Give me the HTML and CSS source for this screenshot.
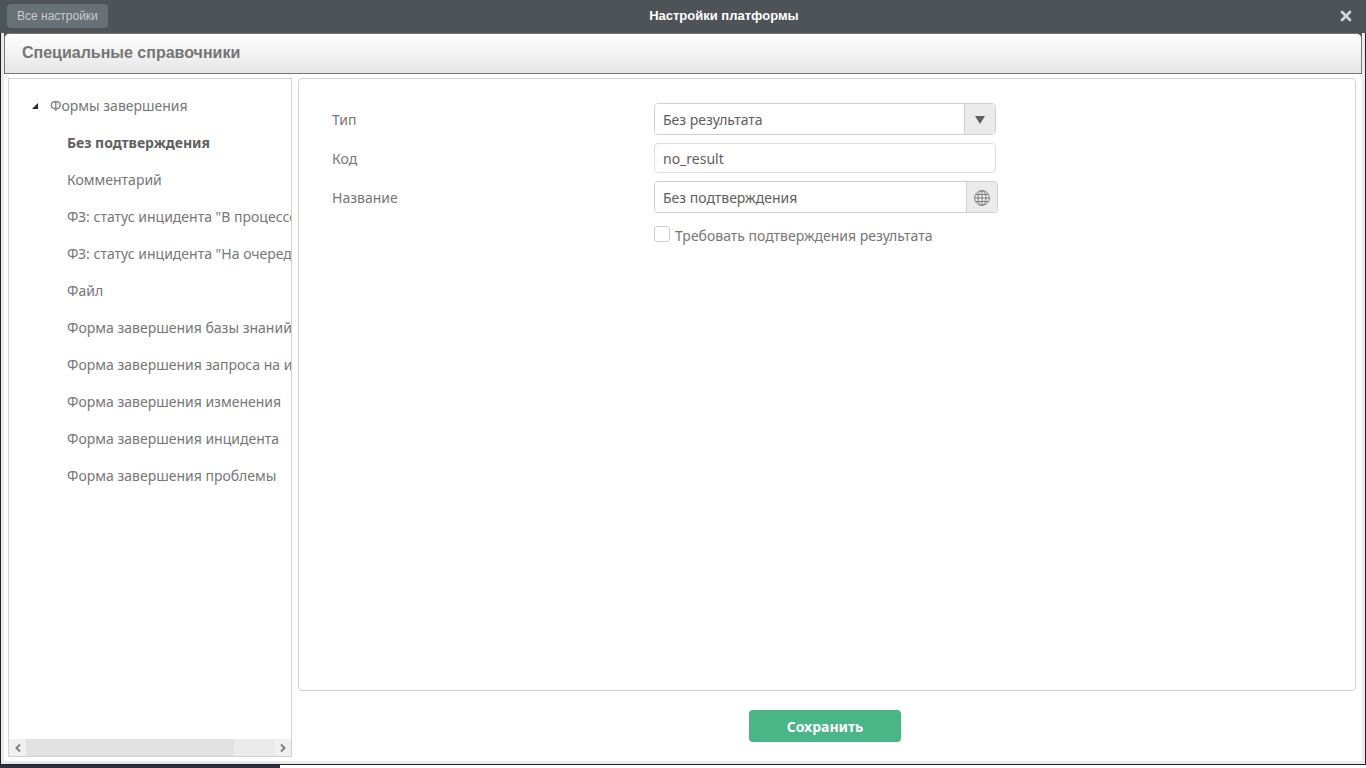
FILE: index.html
```html
<!DOCTYPE html>
<html lang="ru">
<head>
<meta charset="utf-8">
<title>Настройки платформы</title>
<link rel="stylesheet" href="styles.css">
</head>
<body>
<div class="dialog">
  <header class="titlebar">
    <button class="all-settings" type="button">Все настройки</button>
    <h1 class="title">Настройки платформы</h1>
    <button class="close" type="button" aria-label="Закрыть">
      <svg width="12" height="12" viewBox="0 0 12 12"><path d="M2 2L10 10M10 2L2 10" fill="none" stroke="currentColor" stroke-width="2.6" stroke-linecap="round"/></svg>
    </button>
  </header>
  <div class="frame">
    <div class="section-wrap"><h2 class="section">Специальные справочники</h2></div>
    <main class="content">
      <nav class="sidebar" aria-label="Справочники">
        <div class="tree">
          <div class="tree-root">
            <svg class="expander" width="6" height="6" viewBox="0 0 6 6"><path d="M6 0V6H0Z" fill="#222"/><path d="M4.5 3V4.5H3Z" fill="#666"/></svg>
            <span>Формы завершения</span>
          </div>
          <ul class="tree-list">
            <li class="tree-item selected">Без подтверждения</li>
            <li class="tree-item">Комментарий</li>
            <li class="tree-item">ФЗ: статус инцидента "В процессе"</li>
            <li class="tree-item">ФЗ: статус инцидента "На очереди"</li>
            <li class="tree-item">Файл</li>
            <li class="tree-item">Форма завершения базы знаний</li>
            <li class="tree-item">Форма завершения запроса на изменение</li>
            <li class="tree-item">Форма завершения изменения</li>
            <li class="tree-item">Форма завершения инцидента</li>
            <li class="tree-item">Форма завершения проблемы</li>
          </ul>
        </div>
        <div class="scrollbar">
          <button class="scroll-arrow" type="button" aria-label="Влево"><svg width="6" height="8" viewBox="0 0 6 8"><path d="M5 0.5L1.5 4L5 7.5" fill="none" stroke="currentColor" stroke-width="2"/></svg></button>
          <div class="scroll-track"><div class="scroll-thumb"></div></div>
          <button class="scroll-arrow" type="button" aria-label="Вправо"><svg width="6" height="8" viewBox="0 0 6 8"><path d="M1 0.5L4.5 4L1 7.5" fill="none" stroke="currentColor" stroke-width="2"/></svg></button>
        </div>
      </nav>
      <form class="editor">
        <div class="panel">
          <div class="row">
            <label class="label" for="type">Тип</label>
            <div class="field">
              <div class="select-box">
                <select class="select" id="type"><option>Без результата</option></select>
                <span class="addon arrow-addon"><svg width="10" height="8" viewBox="0 0 10 8"><path d="M0 0H10L5 8Z" fill="#606060"/></svg></span>
              </div>
            </div>
          </div>
          <div class="row">
            <label class="label" for="code">Код</label>
            <div class="field"><input class="input" id="code" type="text" value="no_result"></div>
          </div>
          <div class="row">
            <label class="label" for="name">Название</label>
            <div class="field">
              <div class="group">
                <input class="group-input" id="name" type="text" value="Без подтверждения">
                <button class="addon" type="button" aria-label="Перевод">
                  <svg width="16" height="16" viewBox="0 0 16 16" fill="none" stroke="#777" stroke-width=".9"><circle cx="8" cy="8" r="7.4"/><ellipse cx="8" cy="8" rx="4" ry="7.4"/><path d="M8 .6V15.4M.6 8H15.4M2 4.5H14M2 11.5H14"/></svg>
                </button>
              </div>
            </div>
          </div>
          <div class="row">
            <div class="field check-field">
              <input class="check" id="confirm" type="checkbox">
              <label class="check-label" for="confirm">Требовать подтверждения результата</label>
            </div>
          </div>
        </div>
        <div class="actions"><button class="save" type="button">Сохранить</button></div>
      </form>
    </main>
  </div>
</div>
<div class="page-edge"></div>
</body>
</html>
```

FILE: styles.css
```css
* { box-sizing: border-box; }
body {
  margin: 0;
  height: 100vh;
  display: flex;
  flex-direction: column;
  overflow: hidden;
  background: #fff;
  font-family: "Noto Sans", "Open Sans", sans-serif;
  font-size: 14px;
  color: #777;
}
button, input, select { font: inherit; margin: 0; }
button { border: 0; padding: 0; cursor: pointer; }
svg { display: block; }

.dialog {
  flex: 1;
  min-height: 0;
  display: flex;
  flex-direction: column;
  background: #4d5357;
}
.titlebar {
  display: flex;
  align-items: center;
  height: 33px;
  padding: 0 14px 2px 7px;
  font-family: "Liberation Sans", Arial, sans-serif;
}
.all-settings {
  height: 24px;
  padding: 0 10px;
  border-radius: 4px;
  background: #667178;
  color: #ccc;
  font-size: 12px;
}
.title { flex: 1; margin: 0; text-align: center; font-size: 13px; line-height: 16px; font-weight: bold; color: #fff; }
.close { background: none; color: #d6d6d6; }

.frame {
  flex: 1;
  min-height: 0;
  display: flex;
  flex-direction: column;
  background: #fff;
  border: 3px solid #ebeaea;
  border-top: 0;
  outline: 1px solid #222226;
  margin: 0 1px 1px;
  clip-path: inset(0 -1px -1px -1px);
}
.section-wrap { background: #4d5357; }
.section {
  margin: 0;
  height: 41px;
  padding: 0 17px;
  border: 1px solid #77777a;
  border-radius: 5px 5px 0 0;
  background: linear-gradient(#fff, #e6e6e6);
  font-family: "Liberation Sans", Arial, sans-serif;
  font-size: 16px;
  line-height: 38px;
  color: #757575;
}
.content {
  flex: 1;
  min-height: 0;
  display: flex;
  gap: 6px;
  padding: 4px 6px 4px 4px;
}
.sidebar {
  flex: 0 0 284px;
  min-width: 0;
  display: flex;
  flex-direction: column;
  border: 1px solid #d3d3d3;
}
.tree { flex: 1; overflow: hidden; padding-top: 8px; white-space: nowrap; }
.tree-root { display: flex; align-items: center; gap: 12px; height: 37px; padding-left: 23px; }
.tree-list { list-style: none; margin: 0; padding: 0 0 0 58px; }
.tree-item { line-height: 37px; }
.selected { font-weight: bold; color: #606060; }
.scrollbar { display: flex; height: 17px; background: #f0f0f0; }
.scroll-arrow {
  width: 17px;
  display: flex;
  align-items: center;
  justify-content: center;
  background: #f0f0f0;
  color: #808080;
}
.scroll-track { flex: 1; background: #eaeaea; }
.scroll-thumb { width: 84%; height: 100%; background: #e1e1e1; }

.editor { flex: 1; min-width: 0; display: flex; flex-direction: column; }
.panel {
  flex: 1;
  min-height: 0;
  padding: 20px 33px;
  border: 1px solid #d3d3d3;
  border-radius: 4px;
}
.row { display: flex; align-items: center; height: 39px; }
.label { flex: 0 0 322px; padding-top: 2px; }
.field { display: flex; }
.row > .field:first-child { margin-left: 322px; }
.select-box, .group {
  display: flex;
  width: 342px;
  height: 32px;
  border: 1px solid #d0d0d0;
  border-radius: 4px;
  overflow: hidden;
}
.select-box { position: relative; }
.group { width: 344px; }
.select, .group-input, .input {
  flex: 1;
  min-width: 0;
  padding: 2px 8px 0;
  border: 0;
  background: #fff;
  color: #606060;
  outline: 0;
}
.select { appearance: none; padding-right: 40px; }
.input { width: 342px; height: 30px; border: 1px solid #e0e0e0; border-radius: 4px; }
.addon {
  flex: 0 0 31px;
  display: flex;
  align-items: center;
  justify-content: center;
  padding-top: 2px;
  border-left: 1px solid #d0d0d0;
  background: #ebebeb;
}
.arrow-addon { position: absolute; top: 0; right: 0; width: 31px; height: 100%; pointer-events: none; }
.check-field { gap: 5px; align-items: center; }
.check {
  appearance: none;
  width: 16px;
  height: 16px;
  margin-bottom: 4px;
  border: 1px solid #d0d0d0;
  border-radius: 3px;
  background: #fff;
}
.actions { display: flex; justify-content: center; padding: 19px 4px 15px 0; }
.save {
  width: 152px;
  height: 32px;
  border-radius: 4px;
  background: #4ab586;
  color: #fff;
  font-weight: bold;
}
.page-edge { width: 280px; height: 3px; background: #2b303c; }
```
